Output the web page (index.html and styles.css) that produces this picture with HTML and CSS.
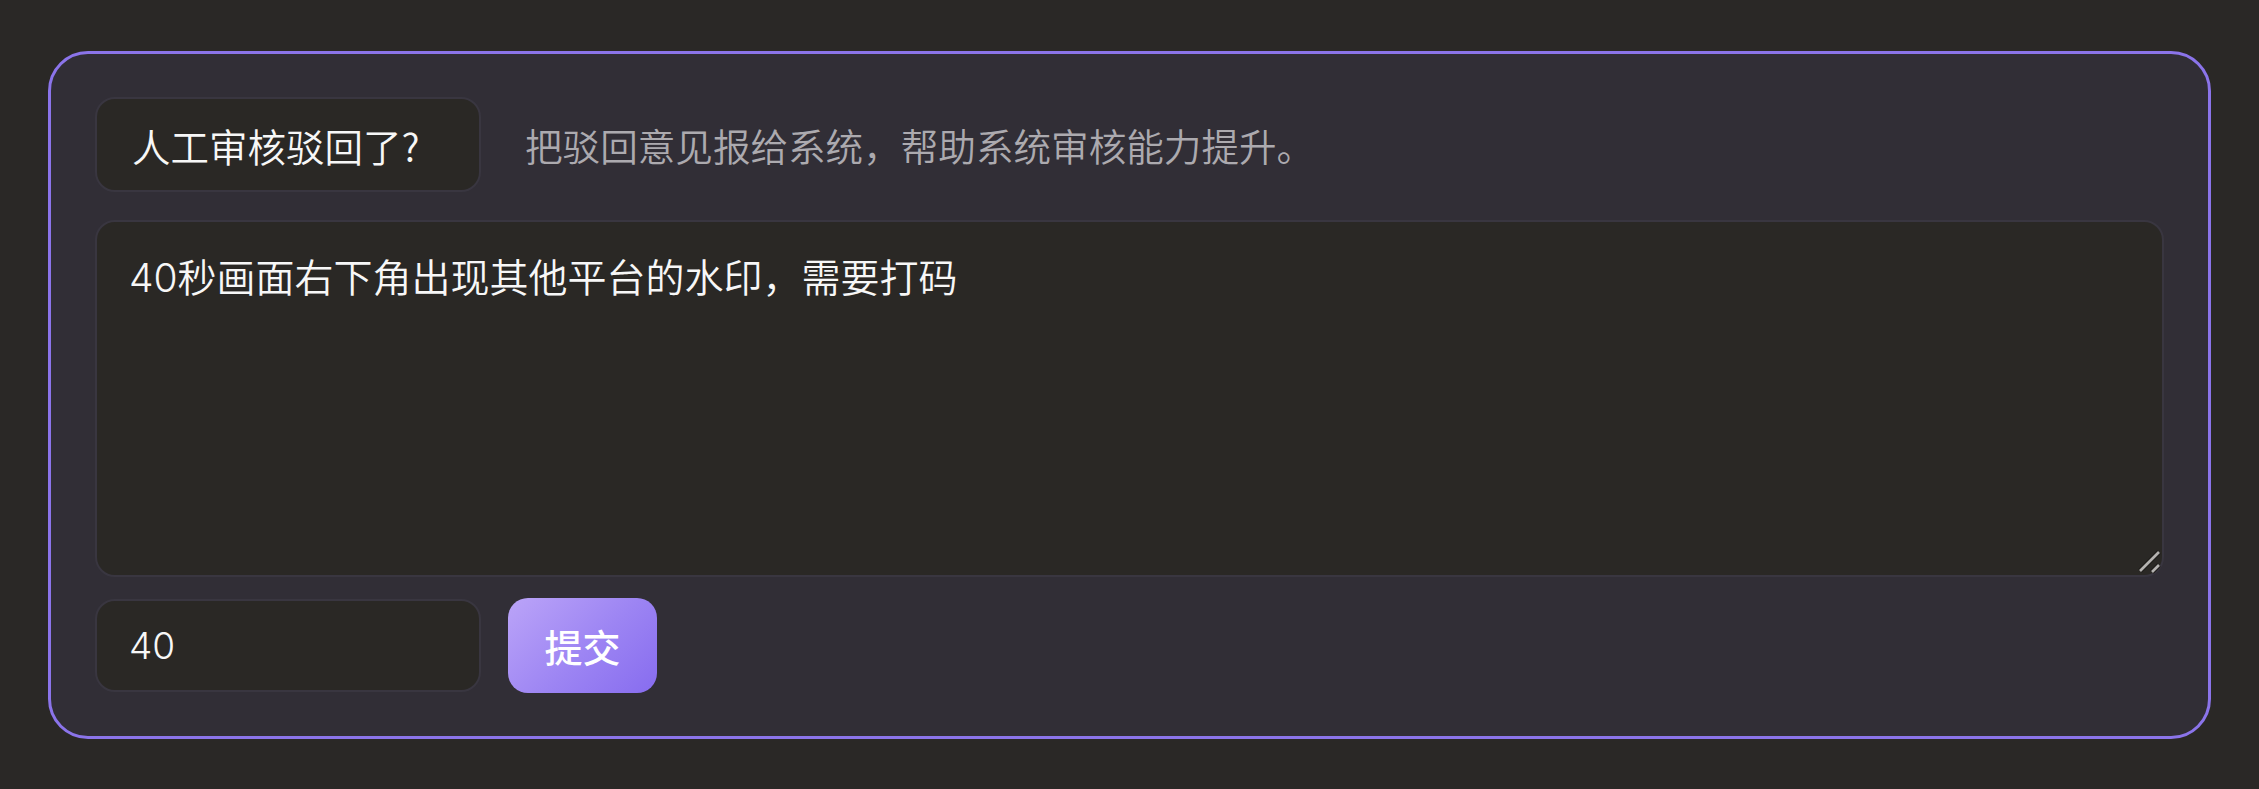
FILE: index.html
```html
<!DOCTYPE html>
<html lang="zh-CN">
<head>
<meta charset="utf-8">
<title>驳回反馈</title>
<link rel="stylesheet" href="styles.css">
</head>
<body>
<div class="page">
  <form class="card">
    <div class="row-top">
      <div class="tag">人工审核驳回了?</div>
      <div class="hint">把驳回意见报给系统，帮助系统审核能力提升。</div>
    </div>
    <div class="reason-wrap">
      <textarea class="reason">40秒画面右下角出现其他平台的水印，需要打码</textarea>
      <svg class="grip" width="24" height="24" viewBox="0 0 24 24" aria-hidden="true">
        <g stroke-linecap="butt">
          <line x1="3" y1="21" x2="22" y2="2" stroke="#1e1c1a" stroke-width="5"/>
          <line x1="3" y1="21" x2="22" y2="2" stroke="#b4b2b0" stroke-width="2.6"/>
          <line x1="15" y1="22" x2="22" y2="15" stroke="#1e1c1a" stroke-width="5"/>
          <line x1="15" y1="22" x2="22" y2="15" stroke="#b4b2b0" stroke-width="2.6"/>
        </g>
      </svg>
    </div>
    <div class="row-bottom">
      <input class="time" type="text" value="40">
      <button class="submit" type="button">提交</button>
    </div>
  </form>
</div>
</body>
</html>
```

FILE: styles.css
```css
html, body {
  margin: 0;
  padding: 0;
  background: #2a2826;
}

.page {
  padding: 51px 48px 40px 48px;
  font-family: "Inter", "Noto Sans CJK SC", sans-serif;
}

.card {
  display: flex;
  flex-direction: column;
  background: #312e36;
  border: 3px solid #8b74ea;
  border-radius: 40px;
  padding: 43px 44px 43px 44px;
}

.row-top {
  display: flex;
  align-items: center;
  gap: 44px;
}

.tag {
  box-sizing: border-box;
  width: 386px;
  height: 95px;
  display: flex;
  align-items: center;
  padding-left: 35px;
  background: #2a2825;
  border: 2px solid #393640;
  border-radius: 20px;
  color: #f7f7f7;
  font-size: 38.5px;
  font-weight: 350;
  font-family: "Noto Sans CJK SC", sans-serif;
}

.hint {
  color: #acaaaf;
  font-size: 37.6px;
  font-weight: 350;
  font-family: "Noto Sans CJK SC", sans-serif;
}

.reason-wrap {
  position: relative;
  margin-top: 28px;
}

.reason {
  display: block;
  box-sizing: border-box;
  width: 100%;
  height: 357px;
  background: #2a2825;
  border: 2px solid #393640;
  border-radius: 20px;
  padding: 27px 32px;
  color: #f7f7f7;
  font-size: 39px;
  font-weight: 350;
  line-height: 1.5;
  font-family: "Inter", "Noto Sans CJK SC", sans-serif;
  resize: none;
  outline: none;
}

.grip {
  position: absolute;
  right: 3px;
  bottom: 3px;
  pointer-events: none;
}

.row-bottom {
  display: flex;
  align-items: center;
  gap: 27px;
  margin-top: 21px;
}

.time {
  box-sizing: border-box;
  width: 386px;
  height: 93px;
  background: #2a2825;
  border: 2px solid #393640;
  border-radius: 20px;
  padding: 0 32px;
  color: #f7f7f7;
  font-size: 37px;
  font-weight: 350;
  font-family: "Inter", "Noto Sans CJK SC", sans-serif;
  outline: none;
}

.submit {
  width: 149px;
  height: 95px;
  border: none;
  border-radius: 20px;
  background: linear-gradient(135deg, #bba4f8 0%, #9c84f3 55%, #876cef 100%);
  color: #ffffff;
  font-size: 38px;
  font-weight: 500;
  font-family: "Noto Sans CJK SC", sans-serif;
  cursor: pointer;
}
```
